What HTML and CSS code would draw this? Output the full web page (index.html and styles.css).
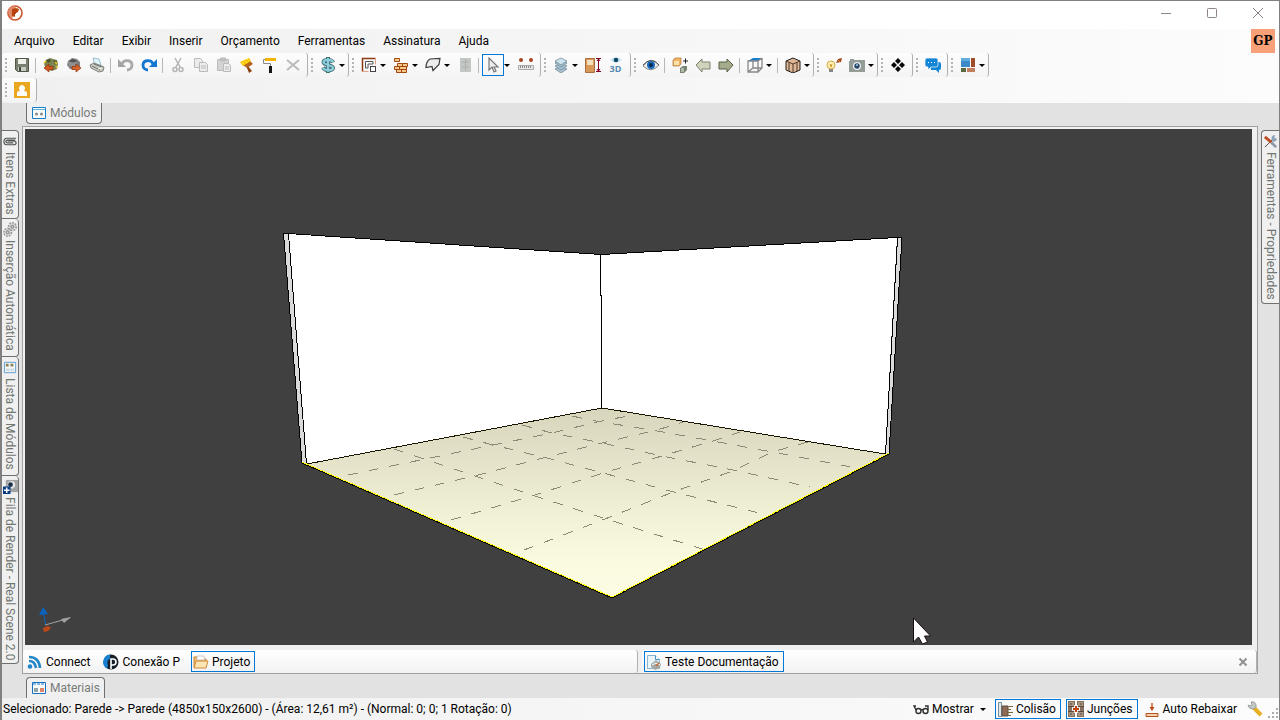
FILE: index.html
```html
<!DOCTYPE html>
<html lang="pt-BR">
<head>
<meta charset="utf-8">
<meta name="viewport" content="width=device-width, initial-scale=1">
<title>Projeto</title>
<link rel="stylesheet" href="styles.css">
</head>
<body>
<div class="window">
  <header class="titlebar">
    <svg class="logo" viewBox="0 0 16 16" role="img" aria-label="Logo"><circle cx="8" cy="8" r="7" fill="#fff" stroke="#c9532b" stroke-width="1.6"/><path d="M2 3 6 1l3 1-1 2-2 1v6l-1 3-3-3-1-4z" fill="#e08a6c"/><path d="M5 4l4-1 3 1-1 3-2 1v1H8v3l-3-1z" fill="#b8430f"/></svg>
    <div class="window-controls">
      <button aria-label="Minimizar"><svg viewBox="0 0 12 12"><path d="M1 6.5h10"/></svg></button>
      <button aria-label="Maximizar"><svg viewBox="0 0 12 12"><rect x="1.5" y="1.5" width="9" height="9" rx="1"/></svg></button>
      <button aria-label="Fechar"><svg viewBox="0 0 12 12"><path d="M1 1l10 10M11 1 1 11"/></svg></button>
    </div>
  </header>

  <div class="chrome">
    <nav class="menubar">
      <button>Arquivo</button><button>Editar</button><button>Exibir</button><button>Inserir</button><button>Orçamento</button><button>Ferramentas</button><button>Assinatura</button><button>Ajuda</button>
      <span class="account">GP</span>
    </nav>
    <div class="toolbar-row">
      <div class="tools">
        <button class="tool" aria-label="Salvar"><svg viewBox="0 0 16 16"><path d="M1.500 1.500h13v13h-11l-2-2z" fill="#788070" stroke="#505848"/><path d="M4 2h8v5H4z" fill="#eef0ec"/><path d="M4 10h8v4H4z" fill="#c8ccc4"/><path d="M5 10h2v4H5z" fill="#40463c"/></svg></button>
        <span class="sep"></span>
        <button class="tool" aria-label="Importar"><svg viewBox="0 0 16 16"><path d="M3 3l4-2 3 1 4 1 1 4-1 5-5 2-6-2-2-5z" fill="#7c8450"/><path d="M3 3l4-1 1 2-3 2zM10 3l4 1-2 3z" fill="#4c5430"/><path d="M1 6l2-2M12 5l2 2M13 9l1 2" stroke="#e8c820" stroke-width="1.500"/><path d="M1 11l5-4v2.500h4v3H6V15z" fill="#d45a20" stroke="#8c3010" stroke-width=".7"/></svg></button>
        <button class="tool" aria-label="Exportar"><svg viewBox="0 0 16 16"><path d="M2 4l4-3 5 1 3 3v5l-4 3-6-1-3-4z" fill="#808080"/><path d="M3 4l4-2 4 2-4 2z" fill="#505050"/><path d="M2 6h8M3 8h6" stroke="#a0a0a0"/><path d="M15 11l-5-4v2.500H6v3h4V15z" fill="#d86428" stroke="#8c3010" stroke-width=".7"/></svg></button>
        <button class="tool" aria-label="Imprimir"><svg viewBox="0 0 16 16"><path d="M4 1l6 1 2 6-6 1z" fill="#e0f4fc" stroke="#78a8bc" stroke-width=".7"/><path d="M1 8l4-2 10 4-1 4-4 1-8-4z" fill="#c8cac4" stroke="#666a60" stroke-width=".8"/><path d="M3 9l8 4M5 7l8 3" stroke="#6c706a"/><path d="M9 12l4-1" stroke="#fff"/></svg></button>
        <span class="sep"></span>
        <button class="tool" aria-label="Desfazer"><svg viewBox="0 0 16 16"><path d="M4 7c2-5 10-4 10 1 0 3-2 5-5 5" fill="none" stroke="#aaa" stroke-width="2.800"/><path d="M0 2v8h8z" fill="#a4a4a4"/></svg></button>
        <button class="tool" aria-label="Refazer"><svg viewBox="0 0 16 16"><path d="M12 7C10 2 2 3 2 8c0 3 2 5 5 5" fill="none" stroke="#1477d2" stroke-width="2.800"/><path d="M16 2v8H8z" fill="#1477d2"/></svg></button>
        <span class="sep"></span>
        <button class="tool" aria-label="Recortar"><svg viewBox="0 0 16 16" fill="none" stroke="#b4b4b4" stroke-width="1.500"><path d="M5 1l5 9M11 1 6 10"/><circle cx="5" cy="12.500" r="2"/><circle cx="11" cy="12.500" r="2"/></svg></button>
        <button class="tool" aria-label="Copiar"><svg viewBox="0 0 16 16" fill="#ececec" stroke="#bbb"><path d="M1.500 1.500h6l2 2v7h-8z"/><path d="M6.500 5.500h6l2 2v7h-8zM8 9h5M8 11h5"/></svg></button>
        <button class="tool" aria-label="Colar"><svg viewBox="0 0 16 16" stroke="#bbb"><path d="M1.500 2.500h11v11h-11z" fill="#d4d4d4"/><path d="M4.500 1h5v3h-5z" fill="#c0c0c0"/><path d="M7.500 6.500h5l2 2v6h-7zM9 10h4M9 12h4" fill="#ececec"/></svg></button>
        <button class="tool" aria-label="Pincel"><svg viewBox="0 0 16 16"><path d="M8 8l5 6-3 2-2-5z" fill="#8c4414"/><path d="M4 8l7-4 3 3-6 4z" fill="#b46420"/><path d="M1 5l9-4 2 3-8 5z" fill="#fac400"/><path d="M3 5l2 2M6 4l2 2M8 2l2 2" stroke="#ffe850"/></svg></button>
        <button class="tool" aria-label="Rolo"><svg viewBox="0 0 16 16"><path d="M3.500 2.500H1.500v4h7v4" fill="none" stroke="#888"/><path d="M3 1h11v3H3z" fill="#f4b400"/><path d="M7 9h3v7H7z" fill="#151515"/></svg></button>
        <button class="tool" aria-label="Excluir"><svg viewBox="0 0 16 16"><path d="M2 3l12 10M14 3 2 13" stroke="#b8b8b8" stroke-width="1.800"/></svg></button>
      </div>
      <div class="tools">
        <button class="tool-drop" aria-label="Orçamento"><svg viewBox="0 0 16 16"><path d="M13 5.500C12 2.500 4 2 3.500 5S13 8 13 11s-8 3-10-.5M8 0v16" fill="none" stroke="#436c70" stroke-width="4"/><path d="M13 5C12 2.500 4 2 3.500 5S13 8 13 11s-8 3-10 0M8 1v14" fill="none" stroke="#8cd0e0" stroke-width="2.200"/></svg><i></i></button>
      </div>
      <div class="tools">
        <button class="tool-drop" aria-label="Paredes"><svg viewBox="0 0 16 16" fill="none"><path d="M1.500 14.500v-13h13" stroke="#8c3c14" stroke-width="1.500"/><path d="M14.500 1.500v6M1.500 14.500h6" stroke="#e8a088"/><path d="M4.500 11V4.500H12V7H7v4z" fill="#fff" stroke="#555"/><rect x="9.500" y="9.500" width="5" height="5" fill="#fff" stroke="#444"/></svg><i></i></button>
        <button class="tool-drop" aria-label="Alvenaria"><svg viewBox="0 0 16 16" fill="#f8c88c" stroke="#a04810"><path d="M1.500 1.500h5v3h-5zM4.500 6.500h5v3h-5zM9.500 6.500h5v3h-5zM1.500 9.500h5v3h-5zM6.500 9.500h7v3h-7zM3.500 12.500h5v3h-5zM8.500 12.500h5v3h-5z"/></svg><i></i></button>
        <button class="tool-drop" aria-label="Piso"><svg viewBox="0 0 16 16"><path d="M5 2l10-.5-1 6-6 6-1-4-6 1q0-6 4-8.500z" fill="#eceeec" stroke="#3c3c3c" stroke-width="1.200"/></svg><i></i></button>
        <button class="tool" aria-label="Armário"><svg viewBox="0 0 16 16"><path d="M3 1h11v14H3z" fill="#c4c8c4"/><path d="M8.500 2v12M5 5h7M5 10h7" stroke="#adb0ad"/></svg></button>
        <span class="sep"></span>
        <button class="tool-drop" aria-label="Selecionar"><span class="pressed"><svg viewBox="0 0 16 16"><path d="M4 1v12l3-3 2 5 2-1-2-4h4z" fill="#eee" stroke="#777" stroke-width="1.200"/></svg></span><i></i></button>
        <button class="tool" aria-label="Medir"><svg viewBox="0 0 16 16"><circle cx="3" cy="3" r="2" fill="#a84420"/><circle cx="13" cy="3" r="2" fill="#a84420"/><path d="M.5 8.500h15v4H.5z" fill="#e8e8e8" stroke="#aaa"/><path d="M2.500 9v2m2-2v2m2-2v2m2-2v2m2-2v2m2-2v2" stroke="#888"/></svg></button>
      </div>
      <div class="tools">
        <button class="tool-drop" aria-label="Camadas"><svg viewBox="0 0 16 16" fill="#a8c4d4" stroke="#68808c" stroke-width=".7"><path d="M2 12l6-3 6 3-6 4z"/><path d="M2 9l6-3 6 3-6 4z"/><path d="M2 6l6-3 6 3-6 4z"/><path d="M2 4l6-3 6 3-6 4z" fill="#cce4ee"/></svg><i></i></button>
        <button class="tool" aria-label="Altura"><svg viewBox="0 0 16 16"><path d="M.5 1.500h9v14h-9z" fill="#d89858" stroke="#a87040"/><path d="M2 3h6v5H2z" fill="#f4e0c0"/><path d="M11 1.500h5M11 14.500h5M13.500 2v12M12 4l1.500-2L15 4M12 12l1.500 2 1.500-2" fill="none" stroke="#800028"/></svg></button>
        <button class="tool" aria-label="Visualizar em 3D"><span class="view-3d"><svg viewBox="0 0 16 8"><path d="M2 4q6-6 12 0-6 5-12 0" fill="#c4e8f0"/><circle cx="8" cy="4" r="2.300" fill="#184868"/></svg>3D</span></button>
      </div>
      <div class="tools">
        <button class="tool" aria-label="Visibilidade"><svg viewBox="0 0 16 16"><path d="M0 9q8-11 16-1-8 9-16 1" fill="#eee" stroke="#888"/><circle cx="8" cy="8" r="4" fill="#186cc0"/><circle cx="8" cy="8" r="2" fill="#082850"/><path d="M0 8q8-9 16 0" fill="none" stroke="#555"/></svg></button>
        <span class="sep"></span>
        <button class="tool" aria-label="Substituir"><svg viewBox="0 0 16 16"><path d="M1 3l2-2h6v6l-2 2H1z" fill="#f0b464" stroke="#b07430" stroke-width=".7"/><path d="M2 4h5v4H2z" fill="#fce0ac"/><path d="M8 11l3-2h4v4l-3 3H8z" fill="#788474"/><path d="M9 11h3v4H9z" fill="#b0b8a8"/><path d="M11 4h5M13.500 1.500v5" stroke="#222"/></svg></button>
        <button class="tool" aria-label="Anterior"><svg viewBox="0 0 16 16"><path d="M1 8l6-6v3h8v7H7v3z" fill="#d0d4bc" stroke="#7c846c"/></svg></button>
        <button class="tool" aria-label="Próximo"><svg viewBox="0 0 16 16"><path d="M15 8 9 2v3H1v7h8v3z" fill="#a4ac8c" stroke="#586048"/></svg></button>
        <span class="sep"></span>
        <button class="tool-drop" aria-label="Perspectiva"><svg viewBox="0 0 16 16"><path d="M1 4l5-3h9l-4 3z" fill="#1680d0"/><path d="M1 4h10v11H1zM6 4v7M15 1v10l-4 4M11 4l4-3M1 15l5-4h9" fill="none" stroke="#888" stroke-width="1.300"/></svg><i></i></button>
        <span class="sep"></span>
        <button class="tool-drop" aria-label="Textura"><svg viewBox="0 0 16 16"><path d="M1 4l7-3 7 3v9l-7 3-7-3z" fill="#e0b898" stroke="#221c18"/><path d="M1 4l7 3 7-3M8 7v9M4 6v8M12 6v8" fill="none" stroke="#4c3828"/></svg><i></i></button>
      </div>
      <div class="tools">
        <button class="tool" aria-label="Iluminação"><svg viewBox="0 0 16 16"><circle cx="5" cy="8" r="4" fill="#fff0b8" stroke="#d8a848"/><path d="M3 12h4v3H3z" fill="#888"/><path d="M4 7l1 3 1-3" fill="none" stroke="#d89828"/><path d="M10 6l2-4 4-1-1 4z" fill="#9c4818"/><path d="M12 3l2 2" stroke="#e08c40"/></svg></button>
        <button class="tool-drop" aria-label="Câmera"><svg viewBox="0 0 16 16"><path d="M0 4h1V2h4v1h11v12H0z" fill="#949c98"/><circle cx="8" cy="9" r="4" fill="#eee"/><circle cx="8" cy="9" r="2.700" fill="#284868"/><circle cx="8" cy="8" r="1" fill="#a0c8e8"/></svg><i></i></button>
      </div>
      <div class="tools">
        <button class="tool" aria-label="Explodir"><svg viewBox="0 0 16 16" fill="#080808"><path d="M8 1l3 3-3 3-3-3zM4 5l3 3-3 3-3-3zM12 5l3 3-3 3-3-3zM8 9l3 3-3 3-3-3z"/></svg></button>
      </div>
      <div class="tools">
        <button class="tool" aria-label="Chat"><svg viewBox="0 0 16 16"><path d="M5 5h9q2 0 2 2v4q0 2-2 2v3l-3-3H6z" fill="#1484d4"/><path d="M2 1h9q2 0 2 2v5q0 2-2 2H6l-3 3v-3q-3 0-3-2V3q0-2 2-2z" fill="#1484d4" stroke="#fff" stroke-width=".7"/><path d="M3 5.500h1m2 0h1m2 0h1" stroke="#fff"/></svg></button>
      </div>
      <div class="tools">
        <button class="tool-drop" aria-label="Disposição"><svg viewBox="0 0 16 16"><path d="M1 1h9v9H1z" fill="#3c88c8"/><path d="M1 1h9v3H1z" fill="#60acdf"/><path d="M11 1h4v9h-4z" fill="#a04c28"/><path d="M1 11h5v4H1z" fill="#586840"/><path d="M7 11h8v4H7z" fill="#c08060"/></svg><i></i></button>
      </div>
    </div>
    <div class="toolbar-row">
      <div class="tools">
        <button class="tool" aria-label="Usuário"><svg viewBox="0 0 16 16"><path d="M0 0h16v16H0z" fill="#eaa820"/><path d="M3 14V11q0-2 3-2-2-3 0-5 2-2 4 0 2 2 0 5 3 0 3 2v3z" fill="#fff"/></svg></button>
      </div>
    </div>
  </div>

  <div class="workspace">
    <aside class="rail rail-left">
      <button class="side-tab grow-88"><svg viewBox="0 0 16 16" fill="none" stroke="#4c5050" stroke-width="1.200"><path d="M14 4.500H4q-3 0-3 3.500t3 3.500h7q3 0 3-2t-3-2H5M13 6.500H5q-2 0-2 1.500t2 1.500h6"/></svg><span>Itens Extras</span></button>
      <button class="side-tab grow-138"><svg viewBox="0 0 16 16" fill="none" stroke="#999" stroke-width="1.800"><circle cx="10" cy="5" r="4" stroke-dasharray="2 1"/><circle cx="5" cy="11" r="4" stroke-dasharray="2 1"/><circle cx="10" cy="5" r="1.500"/><circle cx="5" cy="11" r="1.500"/></svg><span>Inserção Automática</span></button>
      <button class="side-tab grow-119"><svg viewBox="0 0 16 16"><path d="M1.500 2.500h12v11h-12z" fill="#f4f8fa" stroke="#5c9cd0"/><path d="M3 4h3v3H3zM8 4h3v3H8z" fill="#8c8050"/><path d="M3 9h4v3H3zM8 9h4v3H8z" fill="#d0dce0"/></svg><span>Lista de Módulos</span></button>
      <button class="side-tab grow-188"><svg viewBox="0 0 16 16"><path d="M3 1h13v13H3z" fill="#a0a4a4"/><circle cx="9" cy="6" r="4" fill="#e4e4e4"/><circle cx="8" cy="6" r="2.500" fill="#183048"/><path d="M0 8h8v8H0z" fill="#0c3c84"/><path d="M4 9v6M1 12h6" stroke="#fff" stroke-width="1.500"/></svg><span>Fila de Render - Real Scene 2.0</span></button>
    </aside>

    <main class="center">
      <button class="dock-tab dock-top"><svg viewBox="0 0 16 16"><path d="M1.500 2.500h13v11h-13z" fill="#fafcfc" stroke="#1880c8"/><path d="M2 4.500h12" stroke="#6ab0dc"/><circle cx="5.500" cy="9" r="1.500" fill="#888"/><circle cx="10.500" cy="9" r="1.500" fill="#888"/></svg>Módulos</button>

      <section class="document">
        <svg class="scene" viewBox="25 129 1227 516" role="img" aria-label="Vista 3D do ambiente">
          <defs>
            <linearGradient id="floor" x1="0" y1="0" x2="0" y2="1"><stop offset="0" stop-color="#d8d5bd"/><stop offset=".55" stop-color="#f0f0d4"/><stop offset=".8" stop-color="#fafae0"/><stop offset="1" stop-color="#fcfce4"/></linearGradient>
          </defs>
          <path d="M302 463 602 408 888 454 612 597z" fill="url(#floor)"/>
          <path d="M288 233 601 254 897 237 885 454 602 408 307 464z" fill="#fff" shape-rendering="crispEdges"/>
          <path d="M284 234h5l18 230-5-1zM898 238h4l-13 216h-4z" fill="#dadada" shape-rendering="crispEdges"/>
          <g fill="none" stroke="#8c8a73" stroke-dasharray="10 11" shape-rendering="crispEdges">
            <path d="M394 449 478 477 535 496 603 518 702 549"/>
            <path d="M463 437 493 445 547 458 603 473 670 491 767 515"/>
            <path d="M522 425 552 433 602 443 662 456 733 470 810 487"/>
            <path d="M572 416 590 420 657 431 713 441 772 452 857 468"/>
            <path d="M348 475 430 458 493 445 552 433 597 422 633 415"/>
            <path d="M394 495 478 475 543 458 602 443 657 430 683 422"/>
            <path d="M451 520 535 495 603 473 662 456 713 441 740 432"/>
            <path d="M524 550 605 519 673 492 733 471 772 452 808 442"/>
          </g>
          <g fill="none" stroke="#000" shape-rendering="crispEdges">
            <path d="M302 463 283.500 233.500H288L601 254.500 897 237.500H902L889 454M288.500 234 306.500 464M897.500 238 885.500 454"/>
            <path d="M600.500 255V295H601.500V408"/>
            <path d="M307 464 602 408 885 454" stroke="#181400"/>
            <path d="M302 463 612 598 889 454"/>
            <path d="M302 462 612 597 889 453" stroke="#ff0"/>
            <path d="M302 463 612 598 889 454" stroke-dasharray="1 2"/>
          </g>
          <path d="M45.500 624 43 611" stroke="#0c64c0"/><path d="M39 615l4-8 5 7z" fill="#0c64c0"/>
          <path d="M45 625 70 618" stroke="#a0a4a0"/><path d="M61 619l10-2-7 6z" fill="#a0a4a0"/>
          <path d="M43 628l5-2 3 2-3 3-4 1z" fill="#c04818"/>
          <path d="M913.500 618v24l5-5 4 7 5-2-3-6h6z" fill="#fff" stroke="#180c14"/>
        </svg>
        <div class="views">
          <div class="view-group">
            <button class="view"><svg viewBox="0 0 16 16" fill="none" stroke="#2488c8" stroke-width="2.700"><path d="M2 7q6 0 7 7M2 3q10 0 11 11"/><circle cx="3" cy="12.500" r="1" fill="#2488c8"/></svg>Connect</button>
            <button class="view"><svg viewBox="0 0 16 16"><circle cx="8" cy="8" r="7.500" fill="#18202c"/><path d="M7 .5a7.500 7.500 0 0 0-3 14l1-3q-2-5 2-7z" fill="#1880d0"/><path d="M8 15V5h2q3 0 3 3t-3 3H8" fill="none" stroke="#fff" stroke-width="1.600"/></svg>Conexão P</button>
            <button class="view selected"><svg viewBox="0 0 16 16"><path d="M1 3h5l1 2h6v8H1z" fill="#f4c078" stroke="#c88430"/><path d="M4 2h7l1 4H4z" fill="#fff" stroke="#aaa" stroke-width=".6"/><path d="M3 7h12l-2 7H1z" fill="#fce4b4" stroke="#d08c38"/></svg>Projeto</button>
          </div>
          <div class="view-group">
            <button class="view selected"><svg viewBox="0 0 16 16"><path d="M1.500 1.500h8l4 4v9h-12z" fill="#e8f4fa" stroke="#88b4d0"/><path d="M9.500 1.500v4h4" fill="#fff" stroke="#4890c8"/><path d="M5 10l5-4 5 4-1 4-5 2-4-3z" fill="#a4a8a4"/><path d="M6 11l4-2 4 2" fill="none" stroke="#fff"/><path d="M10 12l3-3" stroke="#c86834" stroke-width="1.500"/></svg>Teste Documentação</button>
            <button class="close-view" aria-label="Fechar vista"><svg viewBox="0 0 10 10"><path d="M1.500 1.500l7 7M8.500 1.500l-7 7" stroke="#909090" stroke-width="2"/></svg></button>
          </div>
        </div>
      </section>

      <button class="dock-tab dock-bottom"><svg viewBox="0 0 16 16"><path d="M1.500 2.500h13v11h-13z" fill="#fafcfc" stroke="#1870c0"/><path d="M2 4h12" stroke="#1870c0" stroke-dasharray="3 1"/><path d="M3 8h4v4H3z" fill="#90a4ac"/><path d="M9 8h4v4H9z" fill="#e08468"/></svg>Materiais</button>
    </main>

    <aside class="rail rail-right">
      <button class="side-tab grow-174"><svg viewBox="0 0 16 16"><path d="M2 14 10 6" stroke="#444"/><path d="M2 3l7 6" stroke="#c04c24" stroke-width="3"/><path d="M9 9l5 5" stroke="#8c9cac" stroke-width="3"/><path d="M9 5q0-4 4-4l-1 3 3 1q-1 4-5 3z" fill="#8ca4bc"/></svg><span>Ferramentas - Propriedades</span></button>
    </aside>
  </div>

  <footer class="statusbar">
    <output class="message">Selecionado: Parede -&gt; Parede (4850x150x2600) - (Área: 12,61 m²) - (Normal: 0; 0; 1 Rotação: 0)</output>
    <button class="status-button"><svg viewBox="0 0 16 16" fill="none" stroke="#303030" stroke-width="1.400"><circle cx="5.500" cy="10" r="2.500"/><circle cx="12.500" cy="10" r="2.500"/><path d="M3 9 1 5l2 0M8 9q1-1 2 0M15 9V5h-3"/></svg>Mostrar<i></i></button>
    <button class="status-button selected"><svg viewBox="0 0 16 16"><path d="M1.500 1.500h3v14h-3z" fill="#e0e8ec" stroke="#788c98"/><path d="M5 5h6v10H5z" fill="#8c6c58" stroke="#604c3c"/><path d="M11 5.500h5M11 8.500h3M11 11.500h5M11 14.500h3" stroke="#7c6840"/></svg>Colisão</button>
    <button class="status-button selected"><svg viewBox="0 0 16 16"><path d="M0 0h7v16H0zM9 0h7v16H9z" fill="#84705c"/><path d="M1 1h5v4H1zM10 1h5v4h-5zM1 11h5v4H1zM10 11h5v4h-5z" fill="#a89480"/><path d="M2 3h2M12 3h2M2 13h2M12 13h2M0 5.500h7M9 5.500h7M0 10.500h7M9 10.500h7" stroke="#584c44"/><path d="M8 4v8M4 8h8" stroke="#fff" stroke-width="3.600"/><path d="M8 5v6M5 8h6" stroke="#c04010" stroke-width="2"/></svg>Junções</button>
    <button class="status-button"><svg viewBox="0 0 16 16"><path d="M8 2v7" stroke="#c04818" stroke-width="1.300"/><path d="M5.500 6 8 10l2.500-4" fill="#c04818"/><path d="M2 12.500h12v3H2z" fill="#f8d0a8" stroke="#b05020"/></svg>Auto Rebaixar</button>
    <button class="status-button" aria-label="Configurações"><svg viewBox="0 0 16 16"><path d="M7 7l7 7" stroke="#e8b020" stroke-width="4"/><path d="M1 4l3 1 1-1-1-3q4-1 5 3 1 4-4 4-3 0-4-4" fill="#c4c8c4" stroke="#848884" stroke-width=".7"/></svg></button>
    <svg class="resize" viewBox="0 0 12 12" fill="#aaa"><path d="M9 0h2v2H9zM9 4h2v2H9zM9 8h2v2H9zM5 4h2v2H5zM5 8h2v2H5zM1 8h2v2H1z"/></svg>
  </footer>
</div>
</body>
</html>
```
FILE: styles.css
```css
* { box-sizing: border-box; }

body {
  margin: 0;
  font: 12px/16px Roboto, "Noto Sans", sans-serif;
  color: #000;
}

button {
  margin: 0;
  padding: 0;
  border: 0;
  background: none;
  color: inherit;
  font: inherit;
}

svg { display: block; flex: none; }

.window {
  display: flex;
  flex-direction: column;
  min-height: 100vh;
  border: 1px solid #808080;
  border-left-width: 2px;
  background: #e2e2e2;
}

.titlebar {
  display: flex;
  align-items: center;
  justify-content: space-between;
  height: 28px;
  padding: 0 1px 4px 5px;
  background: #fff;
}
.logo { width: 16px; height: 16px; }
.window-controls { display: flex; gap: 6px; }
.window-controls button {
  display: flex;
  justify-content: center;
  width: 40px;
}
.window-controls svg {
  width: 12px;
  height: 12px;
  fill: none;
  stroke: #8c8488;
}

.chrome { background: linear-gradient(to right, #f0f0f0, #fcfcfc); }

.menubar {
  display: flex;
  align-items: center;
  height: 24px;
  padding: 0 4px 0 3px;
}
.menubar button { padding: 0 9px; }
.account {
  display: grid;
  place-items: center;
  align-self: stretch;
  width: 24px;
  margin-left: auto;
  background: #f8a078;
  font: bold 12px/16px "DejaVu Serif", serif;
}

.toolbar-row { display: flex; height: 25px; }
.tools {
  display: flex;
  align-items: center;
  height: 24px;
  border-right: 1px solid #b0b0b0;
  border-radius: 3px;
  background: linear-gradient(#fdfdfd, #f4f4f4);
}
.tools::before {
  content: "";
  width: 2px;
  height: 14px;
  margin: 0 3px;
  background: repeating-linear-gradient(#b4b4b4 0 2px, transparent 2px 4px);
}
.tool, .tool-drop {
  display: flex;
  align-items: center;
  height: 22px;
}
.tool { justify-content: center; width: 23px; }
.tool:last-child { margin-right: 3px; }
.tool-drop { width: 32px; padding-left: 4px; }
.tool svg, .tool-drop svg { width: 16px; height: 16px; }
.tool-drop i { margin-left: 3px; }
i {
  border: 3px solid transparent;
  border-top-color: #000;
  border-bottom: 0;
}
.pressed {
  margin: 0 -3px 0 -4px;
  padding: 2px;
  border: 1px solid #0078d7;
}
.sep {
  width: 1px;
  height: 15px;
  margin: 0 3px 0 2px;
  background: #b8b8b8;
}
.view-3d {
  display: grid;
  justify-items: center;
  color: #5888b0;
  font: bold 9px/10px "Open Sans", sans-serif;
}
.tool .view-3d svg { height: 8px; }

.workspace {
  display: grid;
  grid-template-columns: 20px 1fr 21px;
  flex: 1;
}

.rail { display: flex; flex-direction: column; padding-top: 27px; }
.rail-left { padding-right: 3px; }
.rail-right { padding-left: 3px; }
.side-tab {
  display: flex;
  align-items: center;
  gap: 3px;
  padding: 3px 0;
  border: 1px solid #707070;
  border-left: 0;
  border-radius: 0 4px 4px 0;
  background: #f0f0f0;
  color: #707670;
  writing-mode: vertical-rl;
  white-space: nowrap;
}
.side-tab svg { width: 15px; height: 15px; }
.side-tab + .side-tab { border-top: 0; }
.rail-right .side-tab {
  border: 1px solid #707070;
  border-right: 0;
  border-radius: 4px 0 0 4px;
}
.grow-88 { min-height: 88px; }
.grow-138 { min-height: 138px; }
.grow-119 { min-height: 119px; }
.grow-188 { min-height: 188px; }
.grow-174 { min-height: 174px; }

.center { display: flex; flex-direction: column; align-items: flex-start; min-width: 0; }
.dock-tab {
  display: flex;
  align-items: center;
  gap: 3px;
  height: 21px;
  margin-left: 4px;
  padding: 0 4px;
  border: 1px solid #707070;
  background: #f0f0f0;
  color: #787c78;
}
.dock-tab svg { width: 16px; height: 16px; }
.dock-top { border-top: 0; border-radius: 0 0 4px 4px; }
.dock-bottom { border-bottom: 0; border-radius: 4px 4px 0 0; }

.document {
  display: flex;
  flex: 1;
  flex-direction: column;
  align-self: stretch;
  margin: 2px 0 3px;
  border: 1px solid #a0a0a0;
  background: #f0f0f0;
}
.scene {
  flex: 1;
  width: calc(100% - 7px);
  margin: 2px 5px 5px 2px;
  background: #404040;
}
.views { display: flex; gap: 4px; }
.view-group {
  display: flex;
  flex: 1;
  align-items: center;
  gap: 6px;
  height: 23px;
  padding-left: 2px;
  border-right: 1px solid #b0b0b0;
  border-radius: 3px;
  background: linear-gradient(#fff, #f2f2f2);
}
.view {
  display: flex;
  align-items: center;
  gap: 3px;
  height: 21px;
  padding: 0 4px 0 1px;
  border: 1px solid transparent;
}
.view svg { width: 16px; height: 16px; }
.selected { border: 1px solid #0078d7; }
.close-view { margin: 0 8px 0 auto; }
.close-view svg { width: 10px; height: 10px; }

.statusbar {
  display: flex;
  align-items: center;
  height: 22px;
  padding-left: 1px;
  background: linear-gradient(to right, #f0f0f0, #fcfcfc);
}
.message { margin-right: auto; }
.status-button {
  display: flex;
  align-items: center;
  gap: 3px;
  height: 20px;
  margin-left: 5px;
  padding: 0 4px 0 1px;
  white-space: nowrap;
}
.status-button svg { width: 16px; height: 16px; }
.status-button i { margin-left: 3px; }
.resize { align-self: flex-end; width: 12px; height: 12px; }
```
